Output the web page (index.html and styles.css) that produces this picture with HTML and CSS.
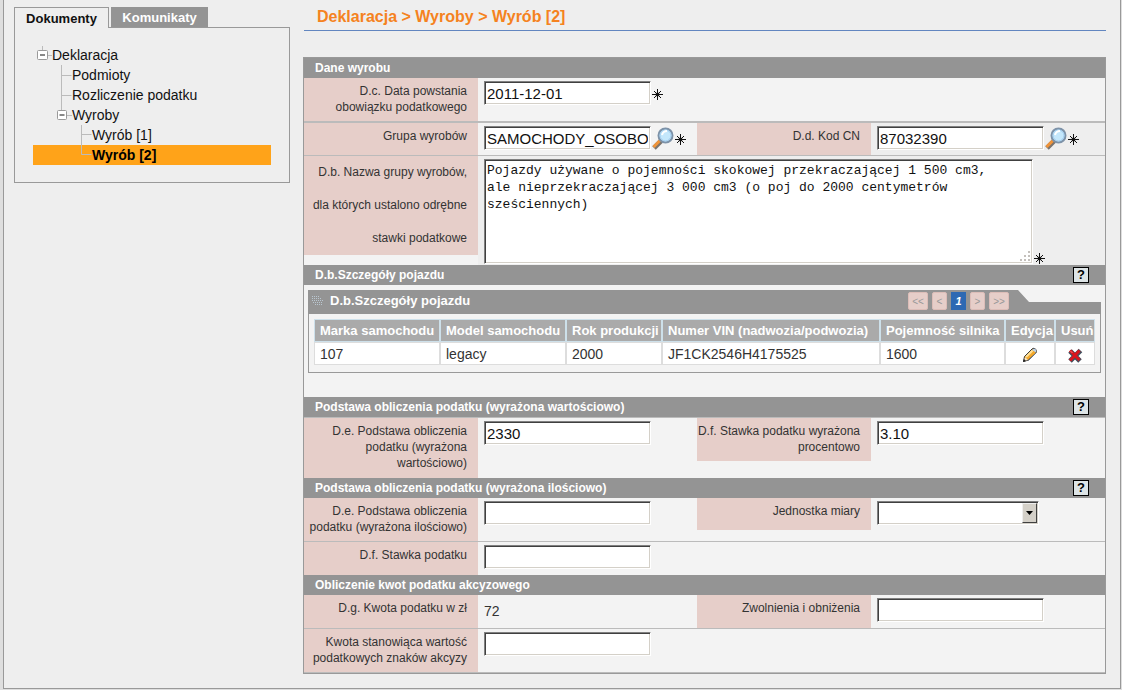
FILE: index.html
```html
<!DOCTYPE html>
<html lang="pl">
<head>
<meta charset="utf-8">
<title>Deklaracja - Wyrób [2]</title>
<link rel="stylesheet" href="styles.css">
</head>
<body>
<svg class="defs" aria-hidden="true">
  <symbol id="star" viewBox="0 0 11 11">
    <path d="M5.500 0v11M0 5.500h11M2 2l7 7M9 2l-7 7" stroke="#111" stroke-width="1"/>
    <circle cx="5.500" cy="5.500" r="2" fill="#111"/>
  </symbol>
  <symbol id="lens" viewBox="0 0 22 24">
    <path d="M2 22l7-7" stroke="#7b746d" stroke-width="5"/>
    <path d="M1.500 21l7-7" stroke="#f0943a" stroke-width="3"/>
    <circle cx="13.500" cy="9.500" r="7" fill="#c4e7fb" stroke="#7d92a8" stroke-width="2"/>
    <circle cx="13.500" cy="9.500" r="5.500" fill="none" stroke="#9fcbee" stroke-width="1"/>
    <path d="M10 9q1-4 5-4" stroke="#fff" stroke-width="2" fill="none"/>
  </symbol>
</svg>
<div class="frame">
  <aside class="sidebar">
    <div class="tabs" role="tablist">
      <button class="tab tab-active" role="tab" aria-selected="true">Dokumenty</button>
      <button class="tab" role="tab" aria-selected="false">Komunikaty</button>
    </div>
    <nav class="tree">
      <a class="node" href="#"><svg class="twig-root" viewBox="1 0 19 20"><path class="twig" d="M10.500 1v5M15 10.500h5"/><rect class="box" x="5.500" y="5.500" width="10" height="9" rx="1"/><path class="minus" d="M8 10h5"/></svg>Deklaracja</a>
      <a class="node node-1" href="#"><svg class="twig-icon" viewBox="0 0 20 20"><path class="twig" d="M9.500 0v20M9.500 10.500h10"/></svg>Podmioty</a>
      <a class="node node-1" href="#"><svg class="twig-icon" viewBox="0 0 20 20"><path class="twig" d="M9.500 0v20M9.500 10.500h10"/></svg>Rozliczenie podatku</a>
      <a class="node node-1" href="#"><svg class="twig-icon" viewBox="0 0 20 20"><path class="twig" d="M9.500 0v6M15 10.500h5"/><rect class="box" x="5.500" y="5.500" width="9" height="9" rx="1"/><path class="minus" d="M7.500 10h5"/></svg>Wyroby</a>
      <a class="node node-2" href="#"><svg class="twig-icon" viewBox="0 0 20 20"><path class="twig" d="M9.500 0v20M9.500 9.500h10"/></svg>Wyrób [1]</a>
      <a class="node node-2 node-current" href="#"><svg class="twig-icon" viewBox="0 0 20 20"><path class="twig" d="M9.500 0v9.500h10"/></svg>Wyrób [2]</a>
    </nav>
  </aside>

  <main class="main">
    <h1 class="title">Deklaracja &gt; Wyroby &gt; Wyrób [2]</h1>
    <form class="form">
      <h2 class="bar">Dane wyrobu</h2>
      <div class="row">
        <label class="label" for="data">D.c. Data powstania obowiązku podatkowego</label>
        <div class="field field-wide"><input class="input" id="data" value="2011-12-01"><svg class="star"><use href="#star"/></svg></div>
      </div>
      <div class="row row-compact row-ruled-thick">
        <label class="label" for="grupa">Grupa wyrobów</label>
        <div class="field"><input class="input" id="grupa" value="SAMOCHODY_OSOBOWE"><button type="button" class="lens" aria-label="Szukaj grupy"><svg><use href="#lens"/></svg></button><svg class="star"><use href="#star"/></svg></div>
        <label class="label label-second" for="cn">D.d. Kod CN</label>
        <div class="field field-dim"><input class="input" id="cn" value="87032390"><button type="button" class="lens" aria-label="Szukaj kodu"><svg><use href="#lens"/></svg></button><svg class="star"><use href="#star"/></svg></div>
      </div>
      <div class="row row-ruled">
        <label class="label label-loose" for="nazwa">D.b. Nazwa grupy wyrobów, dla których ustalono odrębne stawki podatkowe</label>
        <div class="field field-wide field-dim field-area"><textarea class="area" id="nazwa">Pojazdy używane o pojemności skokowej przekraczającej 1 500 cm3, ale nieprzekraczającej 3 000 cm3 (o poj do 2000 centymetrów sześciennych)</textarea><svg class="grip" viewBox="0 0 12 12"><path d="M9 1h2v2h-2zM5 5h2v2h-2zM9 5h2v2h-2zM1 9h2v2h-2zM5 9h2v2h-2zM9 9h2v2h-2z" fill="#c4c0bc"/></svg><svg class="star"><use href="#star"/></svg></div>
      </div>

      <h2 class="bar">D.b.Szczegóły pojazdu<button type="button" class="help">?</button></h2>
      <section class="panel">
        <div class="panel-head">
          <svg class="dots" viewBox="0 0 11 9"><path d="M0 .5h8M0 2.500h10M0 4.500h11M1 6.500h10M3 8.500h8" stroke="#b9c6d0" stroke-dasharray="1 1"/></svg>
          <h3 class="panel-title">D.b.Szczegóły pojazdu</h3>
          <div class="pager">
            <button type="button" class="page page-double">&lt;&lt;</button>
            <button type="button" class="page">&lt;</button>
            <button type="button" class="page page-current">1</button>
            <button type="button" class="page">&gt;</button>
            <button type="button" class="page page-double">&gt;&gt;</button>
          </div>
        </div>
        <div class="panel-body">
          <table class="grid">
            <colgroup><col class="c-name"><col class="c-name"><col class="c-year"><col class="c-vin"><col class="c-size"><col class="c-edit"><col class="c-del"></colgroup>
            <thead><tr><th>Marka samochodu</th><th>Model samochodu</th><th>Rok produkcji</th><th>Numer VIN (nadwozia/podwozia)</th><th>Pojemność silnika</th><th>Edycja</th><th>Usuń</th></tr></thead>
            <tbody><tr><td>107</td><td>legacy</td><td>2000</td><td>JF1CK2546H4175525</td><td>1600</td>
              <td class="act"><button type="button" class="icon" aria-label="Edycja"><svg viewBox="0 0 16 16"><path d="M1.500 14.500l1-5L10 2q2-1.500 3.500 0t.5 4L6.500 13z" fill="#f3a92d" stroke="#27292f"/><path d="M4 10l6.500-6.500" stroke="#ffe29a" stroke-width="2"/><path d="M10 3q2-2.500 3.500-1t.5 3.500z" fill="#b9d0e8"/><path d="M2 14l1-4 3 3z" fill="#f4e4c8"/><path d="M1 15l3-1-2-2z" fill="#222"/><path d="M6.500 13.500L14 6" stroke="#65758b"/></svg></button></td>
              <td class="act"><button type="button" class="icon" aria-label="Usuń"><svg viewBox="0 0 16 16"><path d="M3 4l10 10M13.500 3.500l-10.500 10.500" stroke="#44505e" stroke-width="5"/><path d="M3 3.500l9.500 9.500M12.500 3.500l-9.500 10" stroke="#d9151d" stroke-width="3"/><path d="M3.500 4l2 2" stroke="#f47a7a"/></svg></button></td></tr></tbody>
          </table>
        </div>
      </section>

      <h2 class="bar">Podstawa obliczenia podatku (wyrażona wartościowo)<button type="button" class="help">?</button></h2>
      <div class="row row-ruled row-tall">
        <label class="label" for="podstawa">D.e. Podstawa obliczenia podatku (wyrażona wartościowo)</label>
        <div class="field"><input class="input" id="podstawa" value="2330"></div>
        <label class="label label-second" for="procent">D.f. Stawka podatku wyrażona procentowo</label>
        <div class="field"><input class="input" id="procent" value="3.10"></div>
      </div>

      <h2 class="bar">Podstawa obliczenia podatku (wyrażona ilościowo)<button type="button" class="help">?</button></h2>
      <div class="row">
        <label class="label" for="ilosc">D.e. Podstawa obliczenia podatku (wyrażona ilościowo)</label>
        <div class="field"><input class="input" id="ilosc"></div>
        <label class="label label-second" for="jednostka">Jednostka miary</label>
        <div class="field"><span class="pick"><select class="select" id="jednostka"><option></option></select><span class="pick-arrow"><svg viewBox="0 0 7 4"><path d="M0 0h7L3.500 4z"/></svg></span></span></div>
      </div>
      <div class="row row-ruled">
        <label class="label" for="stawka">D.f. Stawka podatku</label>
        <div class="field field-wide"><input class="input" id="stawka"></div>
      </div>

      <h2 class="bar">Obliczenie kwot podatku akcyzowego</h2>
      <div class="row">
        <span class="label">D.g. Kwota podatku w zł</span>
        <div class="field"><output class="value">72</output></div>
        <label class="label" for="zwolnienia">Zwolnienia i obniżenia</label>
        <div class="field"><input class="input" id="zwolnienia"></div>
      </div>
      <div class="row row-ruled row-last">
        <label class="label" for="znaki">Kwota stanowiąca wartość podatkowych znaków akcyzy</label>
        <div class="field field-wide"><input class="input" id="znaki"></div>
      </div>
    </form>
  </main>
</div>
</body>
</html>
```
FILE: styles.css
```css
* { box-sizing: border-box; }

body {
  margin: 0;
  background: #dedede;
  color: #333;
  font-family: "Liberation Sans", Arial, sans-serif;
}

button, input, select { font-family: inherit; margin: 0; }
button { padding: 0; border: 0; background: none; }
svg { display: block; }
.defs { position: absolute; width: 0; height: 0; }

.frame {
  display: flex;
  align-items: flex-start;
  gap: 13px;
  margin: 0 1px 1px 3px;
  padding: 0 14px 14px 10px;
  border: solid #999;
  border-width: 0 1px 1px;
  background: #eee;
}

/* Sidebar */
.sidebar { flex: 0 0 276px; padding-top: 7px; }
.tabs { display: flex; gap: 2px; }
.tab {
  width: 97px;
  height: 20px;
  background: #949494;
  color: #fff;
  font-size: 13px;
  font-weight: bold;
}
.tab-active {
  position: relative;
  width: 95px;
  height: 21px;
  margin-bottom: -1px;
  border: 1px solid #999;
  border-bottom: 0;
  background: #eee;
  color: #111;
}
.tree { padding: 17px 18px; border: 1px solid #999; }
.node {
  display: flex;
  height: 20px;
  color: #111;
  font-size: 14px;
  line-height: 20px;
  text-decoration: none;
}
.node-1 { padding-left: 19px; }
.node-2 { padding-left: 39px; }
.node-current { background: #ffa319; color: #000; font-weight: bold; }
.twig-root { width: 19px; height: 20px; }
.twig-icon { width: 20px; height: 20px; }
.twig { fill: none; stroke: #bbb; }
.box { fill: #fff; stroke: #999; }
.minus { stroke: #111; }

/* Main column */
.main { flex: 1; min-width: 0; }
.title {
  margin: 0 0 26px 1px;
  padding: 7px 13px 3px;
  border-bottom: 1px solid #6286c0;
  color: #f58220;
  font-size: 16px;
  line-height: 20px;
}
.form { border: 1px solid #999; background: #f3f3f3; }
.bar {
  display: flex;
  align-items: center;
  justify-content: space-between;
  height: 20px;
  margin: 0;
  padding: 0 16px 0 11px;
  background: #949494;
  color: #fff;
  font-size: 12px;
}
.help {
  width: 16px;
  height: 16px;
  border: 1px solid #000;
  background: #dde4e6;
  color: #000;
  font-size: 13px;
  font-weight: bold;
  line-height: 14px;
}

.row {
  display: grid;
  grid-template-columns: 174px 219fr 174px 234fr;
  min-height: 33px;
}
.row-compact { min-height: 32px; }
.row-ruled { min-height: 34px; border-top: 1px solid #bbb; }
.row-ruled-thick { border-top: 2px solid #bbb; }
.row-tall { min-height: 61px; }
.row-last { border-bottom: 1px solid #bbb; }
.label {
  min-height: 32px;
  padding: 5px 11px 6px 0;
  background: #e6cec9;
  font-size: 12px;
  line-height: 16px;
  text-align: right;
}
.label-second { align-self: start; }
.label-loose {
  align-self: start;
  padding-top: 0;
  padding-bottom: 0;
  line-height: 33px;
}
.field { display: flex; align-items: flex-start; padding: 3px 0 4px 6px; }
.field-wide { grid-column: 2 / -1; }
.field-dim { background: #eee; }
.field-area { align-items: flex-end; padding-bottom: 1px; }

.input, .area, .select {
  border: 1px solid;
  border-color: #808080 #fff #fff #808080;
  border-radius: 0;
  background: #fff;
  box-shadow: inset 1px 1px #404040, inset -1px -1px #d4d0c8;
  color: #111;
}
.input { width: 167px; height: 24px; padding: 1px 2px; font-size: 15px; }
.area {
  width: 549px;
  height: 105px;
  padding: 2px 16px 2px 2px;
  resize: none;
  font-family: "Liberation Mono", monospace;
  font-size: 13px;
  line-height: 17px;
}
.grip { width: 12px; height: 12px; margin: 0 2px 2px -14px; }
.star { flex: none; width: 11px; height: 11px; margin-top: 8px; margin-left: 1px; }
.lens { width: 22px; height: 24px; margin-left: 1px; }
.lens svg { width: 22px; height: 24px; }
.value { font-size: 14px; line-height: 26px; }

.pick { position: relative; }
.select { width: 162px; height: 24px; appearance: none; }
.pick-arrow {
  position: absolute;
  top: 2px;
  right: 2px;
  bottom: 2px;
  display: grid;
  place-items: center;
  width: 15px;
  border: 1px solid;
  border-color: #eee #404040 #404040 #eee;
  background: #d4d0c8;
  pointer-events: none;
}
.pick-arrow svg { width: 7px; height: 4px; }

/* Vehicle panel */
.panel { margin: 5px 4px 24px; }
.panel-head {
  display: flex;
  align-items: flex-start;
  height: 24px;
  padding: 2px 92px 0 4px;
  background: #949494;
  clip-path: polygon(0 0, calc(100% - 83px) 0, calc(100% - 72px) 12px, 100% 12px, 100% 100%, 0 100%);
}
.dots { width: 11px; height: 9px; margin: 4px 7px 0 0; }
.panel-title { flex: 1; margin: 0; color: #fff; font-size: 13px; line-height: 17px; }
.pager { display: flex; gap: 4px; }
.page {
  width: 15px;
  height: 18px;
  border: 1px solid #dcbdb8;
  border-radius: 2px;
  background: #e6cec9;
  color: #999;
  font-size: 10px;
}
.page-double { width: 20px; }
.page-current {
  border-color: #2d69b3;
  border-radius: 0;
  background: #2d69b3;
  color: #fff;
  font-size: 11px;
  font-style: italic;
  font-weight: bold;
}
.panel-body { padding: 5px 5px 7px; border: 1px solid #999; border-top: 0; }
.grid { width: 100%; border-collapse: separate; border-spacing: 0; table-layout: fixed; }
.c-name { width: 126px; }
.c-year { width: 96px; }
.c-vin { width: 218px; }
.c-size { width: 125px; }
.c-edit { width: 50px; }
.c-del { width: 40px; }
.grid th, .grid td { height: 23px; padding: 0 0 0 5px; text-align: left; white-space: nowrap; }
.grid th { border: 1px solid #cde0ea; background: #aaa; color: #fff; font-size: 13px; }
.grid td { border: 1px solid #ddd; background: #fff; font-size: 14px; }
.grid .act { padding: 0; }
.icon { display: block; width: 16px; height: 16px; margin: 3px auto 0; }
```
